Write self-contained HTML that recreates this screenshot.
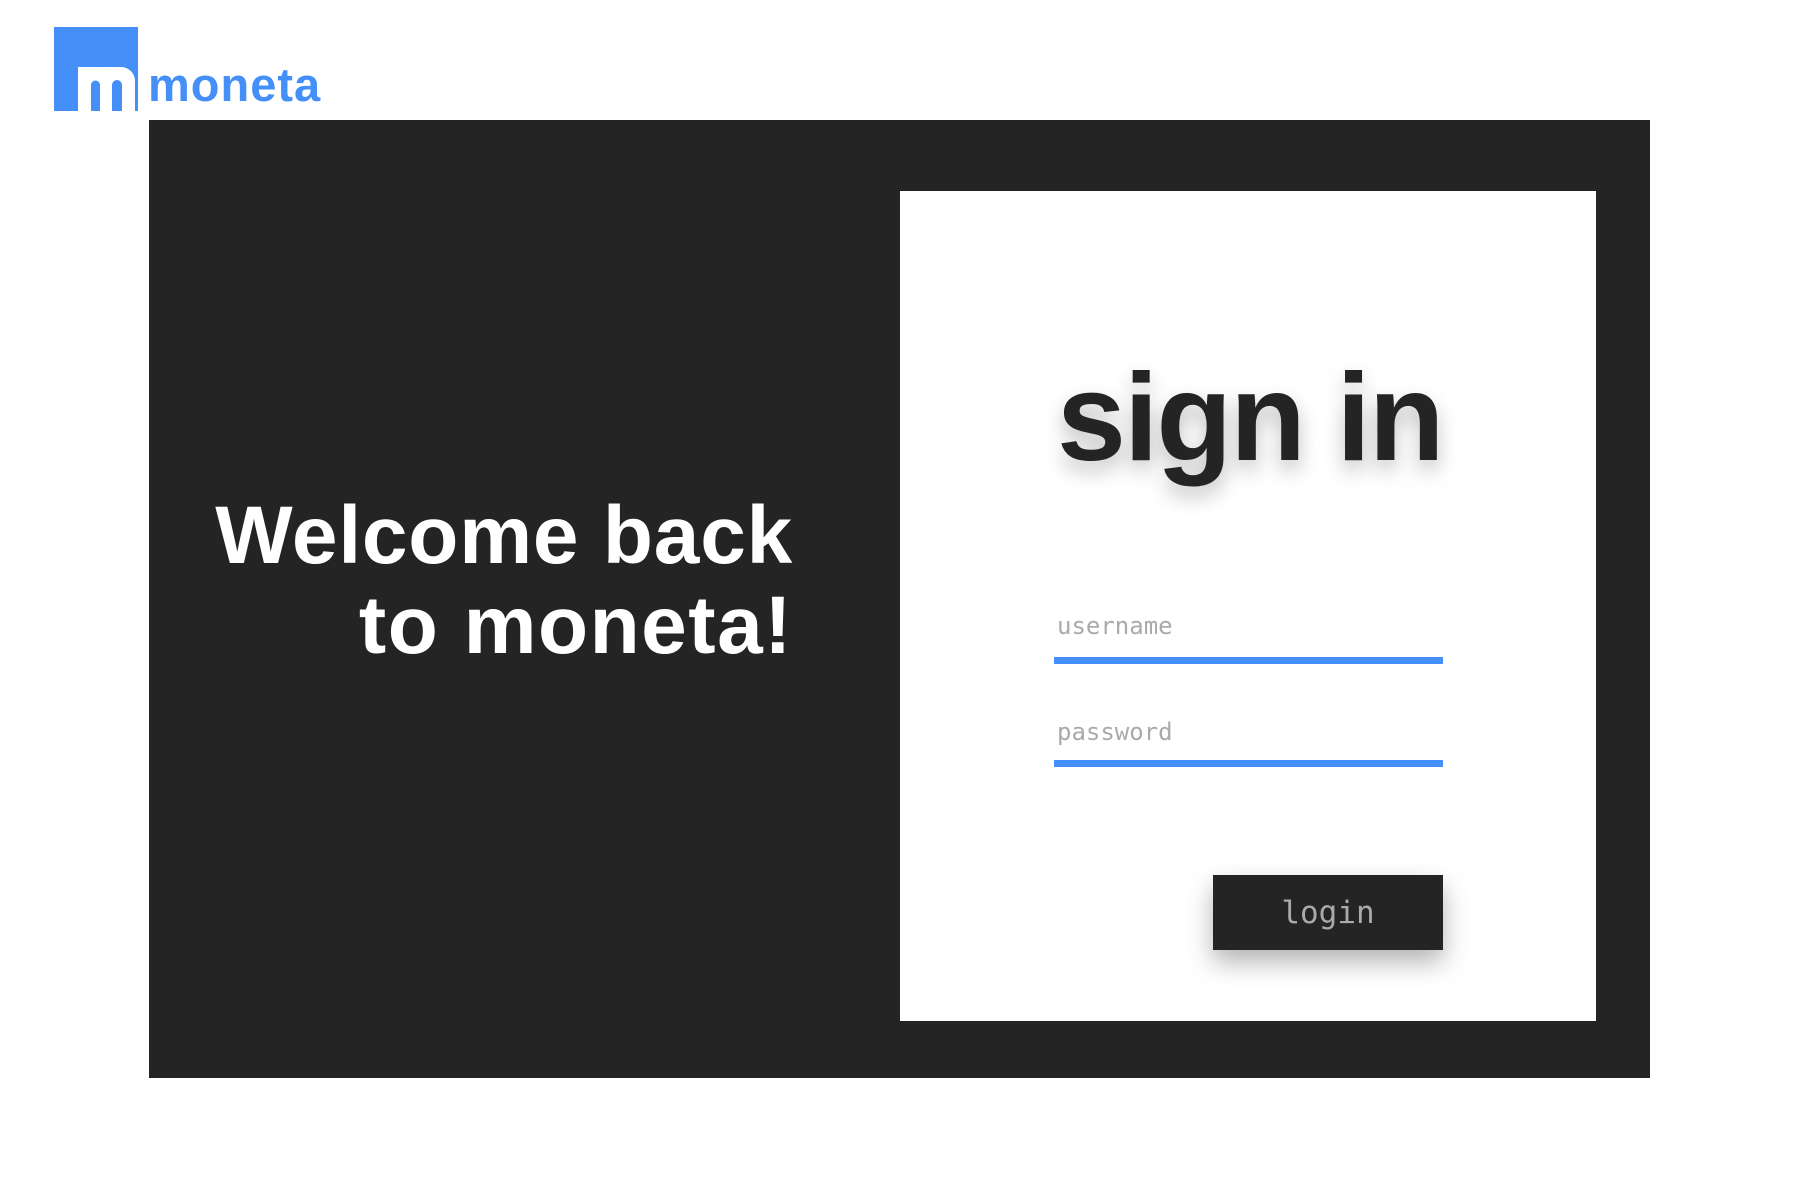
<!DOCTYPE html>
<html><head><meta charset="utf-8"><style>
*{margin:0;padding:0;box-sizing:border-box}
body{width:1800px;height:1200px;background:#fff;position:relative;overflow:hidden;font-family:"Liberation Sans",sans-serif}
.abs{position:absolute}
#sq{left:54px;top:27px;width:84px;height:84px;background:#4490f8}
#panel{left:149px;top:120px;width:1501px;height:958px;background:#242424}
#card{left:900px;top:191px;width:696px;height:830px;background:#fff}
.welcome{right:1007px;color:#fff;font-weight:bold;font-size:82px;letter-spacing:0.8px;white-space:nowrap;line-height:1}
.mono{font-family:"DejaVu Sans Mono","Liberation Mono",monospace;color:#aaa}
.line{left:1054px;width:389px;height:7px;background:#4490f8}
</style></head><body>
<div class="abs" id="sq"></div>
<svg class="abs" style="left:54px;top:27px" width="90" height="84">
<path d="M24 84 V40 H44 A14 14 0 0 1 58 54 V84 Z" fill="#fff"/>
<path d="M46 84 V40 H67 A14 14 0 0 1 81 54 V84 Z" fill="#fff"/>
<path d="M37 84 V58 A4.5 4.5 0 0 1 46 58 V84 Z" fill="#4490f8"/>
<path d="M58 84 V58 A5 5 0 0 1 68 58 V84 Z" fill="#4490f8"/>
</svg>
<div class="abs" style="left:148px;top:61px;color:#4490f8;font-weight:bold;font-size:47px;line-height:1;letter-spacing:1px">moneta</div>
<div class="abs" id="panel"></div>
<div class="abs welcome" style="top:495px">Welcome back</div>
<div class="abs welcome" style="top:585px;letter-spacing:1.5px">to moneta!</div>
<div class="abs" id="card"></div>
<div class="abs" style="left:1057px;top:356px;font-weight:bold;font-size:124px;color:#242424;line-height:1;letter-spacing:-2px;text-shadow:0 10px 20px rgba(0,0,0,0.25)">sign in</div>
<div class="abs mono" style="left:1057px;top:612px;font-size:24px">username</div>
<div class="abs line" style="top:657px"></div>
<div class="abs mono" style="left:1057px;top:718px;font-size:24px">password</div>
<div class="abs line" style="top:760px"></div>
<div class="abs" style="left:1213px;top:875px;width:230px;height:75px;background:#242424;box-shadow:0 12px 24px rgba(0,0,0,0.3);display:flex;align-items:center;justify-content:center"><span class="mono" style="font-size:31px">login</span></div>
</body></html>
